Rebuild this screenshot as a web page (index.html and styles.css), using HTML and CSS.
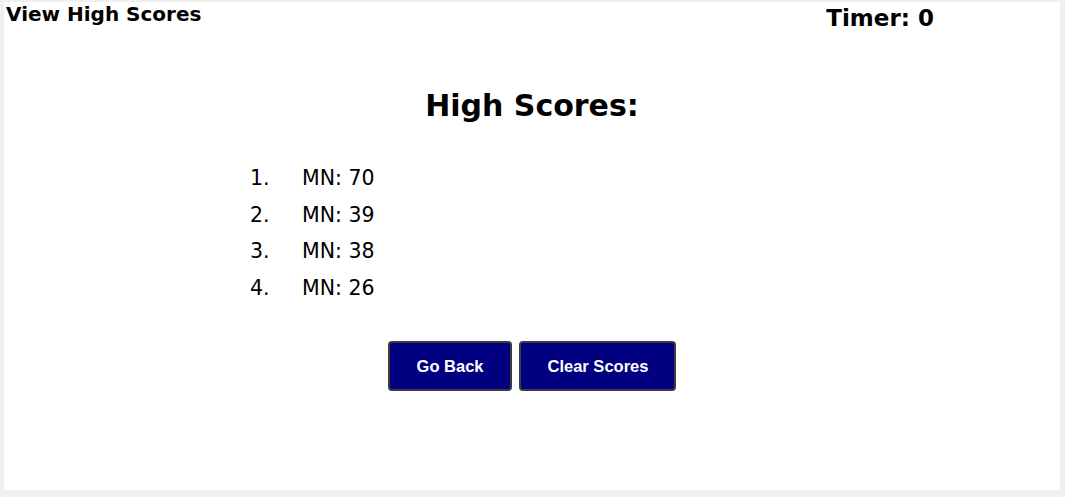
FILE: index.html
```html
<!DOCTYPE html>
<html>
<head>
<meta charset="utf-8">
<link rel="stylesheet" href="styles.css">
</head>
<body>
<div class="page">
  <header class="topbar">
    <a class="view-link">View High Scores</a>
    <div class="timer">Timer: 0</div>
  </header>
  <main class="content">
    <h1 class="title">High Scores:</h1>
    <ol class="scores">
      <li class="score"><span class="num">1.</span><span>MN: 70</span></li>
      <li class="score"><span class="num">2.</span><span>MN: 39</span></li>
      <li class="score"><span class="num">3.</span><span>MN: 38</span></li>
      <li class="score"><span class="num">4.</span><span>MN: 26</span></li>
    </ol>
    <div class="actions">
      <button class="btn btn-back">Go Back</button>
      <button class="btn btn-clear">Clear Scores</button>
    </div>
  </main>
</div>
</body>
</html>
```

FILE: styles.css
```css
html, body {
  margin: 0;
  padding: 0;
}
body {
  background: #f0f0f0;
  font-family: "DejaVu Sans", Verdana, sans-serif;
  color: #000;
}
.page {
  background: #fff;
  margin: 2px 5px 0 4px;
  height: 488px;
  box-sizing: border-box;
}
.topbar {
  display: flex;
  align-items: flex-start;
  height: 40px;
}
.view-link {
  font-weight: bold;
  font-size: 20px;
  line-height: 24px;
  margin-left: 2px;
  margin-top: 0;
}
.timer {
  font-weight: bold;
  font-size: 23px;
  line-height: 28px;
  margin-left: auto;
  margin-right: 126px;
  margin-top: 2px;
}
.content {
  display: flex;
  flex-direction: column;
  align-items: center;
}
.title {
  font-size: 30px;
  font-weight: bold;
  margin: 44px 0 0 0;
  line-height: 40px;
}
.scores {
  list-style: none;
  margin: 34px 0 0 0;
  padding: 0;
  align-self: flex-start;
  margin-left: 246px;
}
.score {
  display: flex;
  font-size: 20.5px;
  line-height: 36.5px;
}
.num {
  width: 52px;
}
.actions {
  display: flex;
  gap: 7px;
  margin-top: 35px;
}
.btn {
  background: #000080;
  color: #fff;
  font-family: "Liberation Sans", Arial, sans-serif;
  font-weight: bold;
  font-size: 16.5px;
  height: 50px;
  padding: 0 26px 0 27px;
  border: 2px solid #3c3c3c;
  border-radius: 4px;
}
```
